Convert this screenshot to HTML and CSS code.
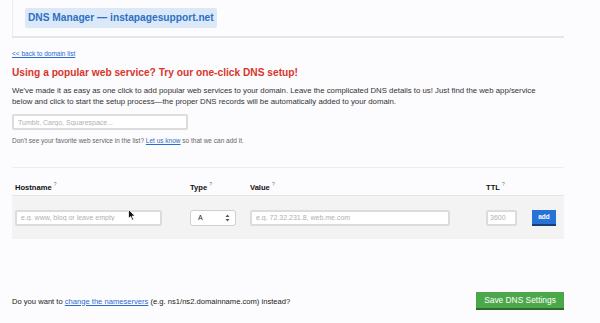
FILE: index.html
```html
<!DOCTYPE html>
<html lang="en">

<head>
    <meta charset="UTF-8" />
    <meta name="viewport" content="width=device-width, initial-scale=1.0" />
    <title>DNS Manager</title>
    <link rel="stylesheet" href="styles.css">
</head>

<body>
    <div class="page">
        <div class="topbar">
            <div class="title">DNS Manager &mdash; instapagesupport.net</div>
        </div>

        <a class="back-link" href="#">&lt;&lt; back to domain list</a>

        <h2 class="promo-title">Using a popular web service? Try our one-click DNS setup!</h2>
        <p class="promo-text">We've made it as easy as one click to add popular web services to your domain. Leave the complicated DNS details to us! Just find the web app/service below and click to start the setup process&mdash;the proper DNS records will be automatically added to your domain.</p>
        <input class="field service-search" type="text" placeholder="Tumblr, Cargo, Squarespace..." />
        <p class="hint">Don't see your favorite web service in the list? <a href="#">Let us know</a> so that we can add it.</p>

        <div class="records">
            <div class="records-head">
                <div>Hostname <sup>?</sup></div>
                <div>Type <sup>?</sup></div>
                <div>Value <sup>?</sup></div>
                <div>TTL <sup>?</sup></div>
                <div></div>
            </div>
            <div class="records-row">
                <div class="cell">
                    <input class="field host-input" type="text" placeholder="e.g. www, blog or leave empty" />
                    <svg class="cursor" width="8" height="12" viewBox="0 0 8 12">
                        <path d="M0.5 0.5 L0.5 9.5 L2.6 7.6 L4.2 11.2 L5.6 10.6 L4.1 7.1 L7 7.1 Z" fill="#111" stroke="#fff" stroke-width="0.8" />
                    </svg>
                </div>
                <div class="select-box">
                    <span>A</span>
                    <svg width="5" height="8" viewBox="0 0 5 8">
                        <path d="M0.5 3 L2.5 0.5 L4.5 3 Z M0.5 5 L2.5 7.5 L4.5 5 Z" fill="#555" />
                    </svg>
                </div>
                <input class="field value-input" type="text" placeholder="e.g. 72.32.231.8, web.me.com" />
                <input class="field ttl-input" type="text" placeholder="3600" />
                <button class="add-btn">add</button>
            </div>
        </div>

        <div class="footer">
            <p>Do you want to <a href="#">change the nameservers</a> (e.g. ns1/ns2.domainname.com) instead?</p>
            <button class="save-btn">Save DNS Settings</button>
        </div>
    </div>
</body>

</html>
```

FILE: styles.css
```css
body {
    margin: 0;
    font-family: 'Liberation Sans', Arial, sans-serif;
    background-color: #fcfbfd;
    color: #333;
}

.page {
    margin-left: 12px;
    width: 552px;
}

/* header strip */
.topbar {
    height: 38px;
    border-left: 1px solid #ececec;
    border-bottom: 2px solid #e6e6e8;
    padding-top: 7px;
    box-sizing: border-box;
}

.title {
    display: inline-block;
    margin-left: 12px;
    padding: 0 3px;
    height: 20px;
    line-height: 20px;
    background-color: #dbe8f8;
    border-radius: 2px;
    color: #2d70c4;
    font-weight: bold;
    font-size: 10.2px;
}

a {
    color: #2a6cd0;
}

.back-link {
    display: block;
    margin-top: 12px;
    font-size: 6.5px;
}

.promo-title {
    margin: 9px 0 0;
    color: #d8352b;
    font-size: 10.2px;
    line-height: 14px;
}

.promo-text {
    margin: 5px 0 0;
    max-width: 526px;
    font-size: 7.8px;
    line-height: 11px;
    color: #333;
}

.field {
    display: block;
    height: 16px;
    box-sizing: border-box;
    border: 2px solid #dcdcdc;
    border-radius: 2px;
    background: #fff;
    padding: 0 4px;
    font-family: inherit;
    font-size: 7px;
    color: #333;
}

.field::placeholder {
    color: #b0b0b0;
}

.service-search {
    margin-top: 7px;
    width: 176px;
}

.hint {
    margin: 7px 0 0;
    font-size: 6.5px;
    color: #666;
}

/* record table */
.records {
    margin-top: 23px;
    border-top: 1px solid #ededed;
}

.records-head,
.records-row {
    display: grid;
    grid-template-columns: 175px 60px 236px 46px auto;
    padding-left: 3px;
    align-items: center;
}

.records-head {
    height: 28px;
    padding-top: 10px;
    box-sizing: border-box;
    border-bottom: 1px solid #e4e4e4;
    font-size: 7.6px;
    font-weight: bold;
    color: #111;
}

.records-head sup {
    font-size: 5px;
    font-weight: normal;
    color: #777;
}

.records-row {
    height: 43px;
    background-color: #f3f3f3;
}

.cell {
    position: relative;
}

.host-input {
    width: 147px;
}

.cursor {
    position: absolute;
    left: 113px;
    top: -1px;
}

.select-box {
    width: 46px;
    height: 16px;
    box-sizing: border-box;
    border: 1px solid #cfcfcf;
    border-radius: 3px;
    background: #fff;
    display: flex;
    justify-content: space-between;
    align-items: center;
    padding: 0 5px 0 7px;
    font-size: 7px;
    color: #222;
}

.value-input {
    width: 200px;
}

.ttl-input {
    width: 31px;
    padding: 0 2px;
}

.add-btn {
    width: 24px;
    height: 16px;
    padding: 0;
    border: none;
    border-bottom: 2px solid #183e75;
    background-color: #2672d6;
    color: white;
    font-family: inherit;
    font-size: 6.5px;
    font-weight: bold;
    cursor: pointer;
}

.footer {
    margin-top: 53px;
    display: flex;
    justify-content: space-between;
    align-items: center;
}

.footer p {
    margin: 0;
    font-size: 7.6px;
    color: #222;
}

.save-btn {
    width: 88px;
    height: 18px;
    padding: 0;
    border: none;
    border-bottom: 2px solid #2d6a2b;
    background-color: #4ba84a;
    color: white;
    font-family: inherit;
    font-size: 8.4px;
    cursor: pointer;
}
```
